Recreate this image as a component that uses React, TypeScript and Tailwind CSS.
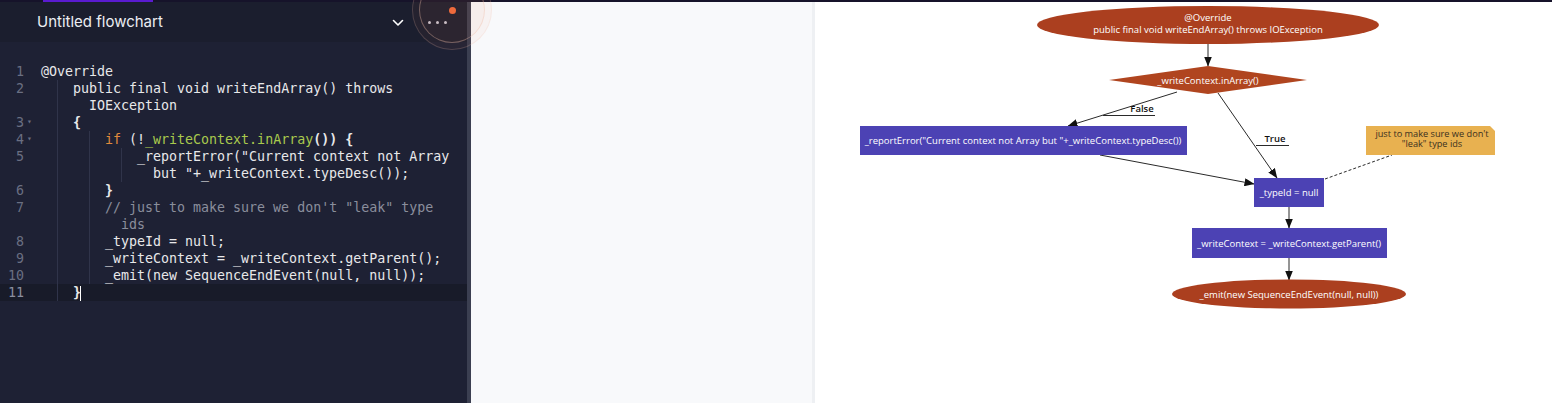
import React from "react";

type Seg = { t: string; c?: string; b?: boolean };
type Row = { n?: number; fold?: boolean; indent: number; guides: number[]; segs: Seg[]; active?: boolean; cursor?: boolean };

const W = "#e8e8ea";
const rows: Row[] = [
  { n: 1, indent: 0, guides: [], segs: [{ t: "@Override" }] },
  { n: 2, indent: 32, guides: [16], segs: [{ t: "public final void writeEndArray() throws" }] },
  { indent: 48, guides: [16], segs: [{ t: "IOException" }] },
  { n: 3, fold: true, indent: 32, guides: [16], segs: [{ t: "{", b: true }] },
  {
    n: 4,
    fold: true,
    indent: 64,
    guides: [16, 48],
    segs: [
      { t: "if", c: "#e08a3c" },
      { t: " (!" },
      { t: "_writeContext.inArray", c: "#a9c94d" },
      { t: "()) {", b: true },
    ],
  },
  { n: 5, indent: 96, guides: [16, 48, 80], segs: [{ t: '_reportError("Current context not Array' }] },
  { indent: 112, guides: [16, 48, 80], segs: [{ t: 'but "+_writeContext.typeDesc());' }] },
  { n: 6, indent: 64, guides: [16, 48], segs: [{ t: "}", b: true }] },
  { n: 7, indent: 64, guides: [16, 48], segs: [{ t: '// just to make sure we don\'t "leak" type', c: "#8a8e9c" }] },
  { indent: 80, guides: [16, 48], segs: [{ t: "ids", c: "#8a8e9c" }] },
  { n: 8, indent: 64, guides: [16, 48], segs: [{ t: "_typeId = null;" }] },
  { n: 9, indent: 64, guides: [16, 48], segs: [{ t: "_writeContext = _writeContext.getParent();" }] },
  { n: 10, indent: 64, guides: [16, 48], segs: [{ t: "_emit(new SequenceEndEvent(null, null));" }] },
  { n: 11, indent: 32, guides: [16], segs: [{ t: "}", b: true }], active: true, cursor: true },
];

function CodeRow({ r }: { r: Row }) {
  return (
    <div className={`flex h-[17px] ${r.active ? "bg-[#181b29]" : ""}`}>
      <div className={`relative w-[38px] shrink-0 text-right ${r.active ? "text-[#8b8fa0]" : "text-[#6a6f82]"}`}>
        {r.n !== undefined && <span className="absolute right-[14px] top-0 leading-[17px]">{r.n}</span>}
        {r.fold && <span className="absolute left-[27px] top-0 leading-[15px] text-[8px] text-[#6a6f82]">▾</span>}
      </div>
      <div className="relative flex-1 pl-[3px]">
        {r.guides.map((g) => (
          <span key={g} className="absolute top-0 h-[17px] w-px bg-[#30344a]" style={{ left: 3 + g }} />
        ))}
        <div className="whitespace-pre leading-[17px]" style={{ paddingLeft: r.indent, color: W }}>
          {r.segs.map((s, i) => (
            <span key={i} style={{ color: s.c ?? W }} className={s.b ? "font-bold" : ""}>
              {s.t}
            </span>
          ))}
          {r.cursor && <span className="inline-block w-px h-[15px] bg-white align-middle -ml-[1px]" />}
        </div>
      </div>
    </div>
  );
}

function Flowchart() {
  const ff = "'Open Sans', 'Noto Sans', sans-serif";
  return (
    <svg width="737" height="401" viewBox="815 2 737 401" className="block">
      <defs>
        <marker id="ah" markerWidth="10" markerHeight="8" refX="9.5" refY="4" orient="auto" markerUnits="userSpaceOnUse">
          <path d="M0,0 L10,4 L0,8 z" fill="#111" />
        </marker>
      </defs>
      <g stroke="#2a2a2a" strokeWidth="1" fill="none">
        <line x1="1208" y1="44" x2="1208" y2="66" markerEnd="url(#ah)" />
        <line x1="1177" y1="92" x2="1068" y2="126" markerEnd="url(#ah)" />
        <line x1="1103" y1="115.5" x2="1155" y2="115.5" />
        <line x1="1218" y1="93" x2="1277" y2="178" markerEnd="url(#ah)" />
        <line x1="1256" y1="145.5" x2="1289" y2="145.5" />
        <line x1="1100" y1="155" x2="1254" y2="184" markerEnd="url(#ah)" />
        <line x1="1325" y1="179" x2="1392" y2="155" strokeDasharray="3 2" />
        <line x1="1289" y1="207" x2="1289" y2="228" markerEnd="url(#ah)" />
        <line x1="1289" y1="258" x2="1289" y2="280" markerEnd="url(#ah)" />
      </g>
      <ellipse cx="1208" cy="25" rx="171" ry="19" fill="#ab3f1f" />
      <polygon points="1109,80 1208,66 1307,80 1208,94" fill="#b0451f" />
      <rect x="860" y="126" width="327" height="29" fill="#4c42b4" />
      <rect x="1254" y="178" width="70" height="29" fill="#4c42b4" />
      <rect x="1192" y="228" width="195" height="30" fill="#4c42b4" />
      <ellipse cx="1289" cy="294" rx="117" ry="14.5" fill="#ab3f1f" />
      <path d="M1366,126 H1490 L1495,131 V155 H1366 Z" fill="#e8b150" />
      <g fontFamily={ff} fontSize="9.5" fill="#ffffff" textAnchor="middle">
        <text x="1208" y="21">@Override</text>
        <text x="1208" y="32.5">public final void writeEndArray() throws IOException</text>
        <text x="1208" y="83.5">_writeContext.inArray()</text>
        <text x="1023" y="143.5">_reportError("Current context not Array but "+_writeContext.typeDesc())</text>
        <text x="1289" y="195.5">_typeId = null</text>
        <text x="1289" y="246.5">_writeContext = _writeContext.getParent()</text>
        <text x="1289" y="297.5">_emit(new SequenceEndEvent(null, null))</text>
      </g>
      <g fontFamily={ff} fontSize="9.5" fill="#111" fontWeight="600" textAnchor="middle">
        <text x="1142" y="112">False</text>
        <text x="1275" y="142">True</text>
      </g>
      <g fontFamily={ff} fontSize="9.2" fill="#3a3020" textAnchor="middle">
        <text x="1432" y="137">just to make sure we don't</text>
        <text x="1432" y="147">"leak" type ids</text>
      </g>
    </svg>
  );
}

export default function App() {
  return (
    <div className="relative w-[1552px] h-[403px] overflow-hidden flex flex-col bg-white">
      <div className="h-[2px] shrink-0 bg-[#16132a] flex">
        <div className="ml-[43px] w-[110px] h-full bg-[#5a1bd0]" />
      </div>
      <div className="flex flex-1 min-h-0">
        <div className="w-[467px] shrink-0 flex flex-col bg-[#1e2134]">
          <div className="h-[40px] shrink-0 bg-[#1b1e2e] flex items-center pl-[37px] pt-[1px]">
            <span className="text-[15px] text-[#eceef3]" style={{ fontFamily: "Inter, 'Noto Sans', sans-serif" }}>
              Untitled flowchart
            </span>
            <svg className="ml-[229px]" width="12" height="8" viewBox="0 0 12 8">
              <path d="M1.5 1.5 L6 6 L10.5 1.5" stroke="#ffffff" strokeWidth="1.6" fill="none" strokeLinecap="round" strokeLinejoin="round" />
            </svg>
            <div className="ml-[24px] flex gap-[5px] items-center">
              <span className="w-[3px] h-[3px] rounded-full bg-[#c8c5d0]" />
              <span className="w-[3px] h-[3px] rounded-full bg-[#c8c5d0]" />
              <span className="w-[3px] h-[3px] rounded-full bg-[#c8c5d0]" />
            </div>
          </div>
          <div
            className="flex-1 pt-[21px] text-[13.3px]"
            style={{ fontFamily: "'DejaVu Sans Mono', 'Liberation Mono', monospace" }}
          >
            {rows.map((r, i) => (
              <CodeRow key={i} r={r} />
            ))}
          </div>
        </div>
        <div className="w-[4px] shrink-0 bg-[#3b3f51]" />
        <div className="w-[344px] shrink-0 bg-[#f8f9fb] border-r-[3px] border-[#eef0f3]" />
        <div className="flex-1 bg-white">
          <Flowchart />
        </div>
      </div>
      <div className="absolute left-[412px] top-[-30px] w-[80px] h-[80px] rounded-full border border-[rgba(240,190,170,0.2)] bg-[rgba(235,120,80,0.05)] pointer-events-none" />
      <div className="absolute left-[419px] top-[-23px] w-[66px] h-[66px] rounded-full border border-[rgba(240,190,170,0.38)] bg-[rgba(235,120,80,0.04)] pointer-events-none" />
      <div className="absolute left-[449px] top-[7px] w-[7px] h-[7px] rounded-full bg-[#ee6a3c]" />
    </div>
  );
}
